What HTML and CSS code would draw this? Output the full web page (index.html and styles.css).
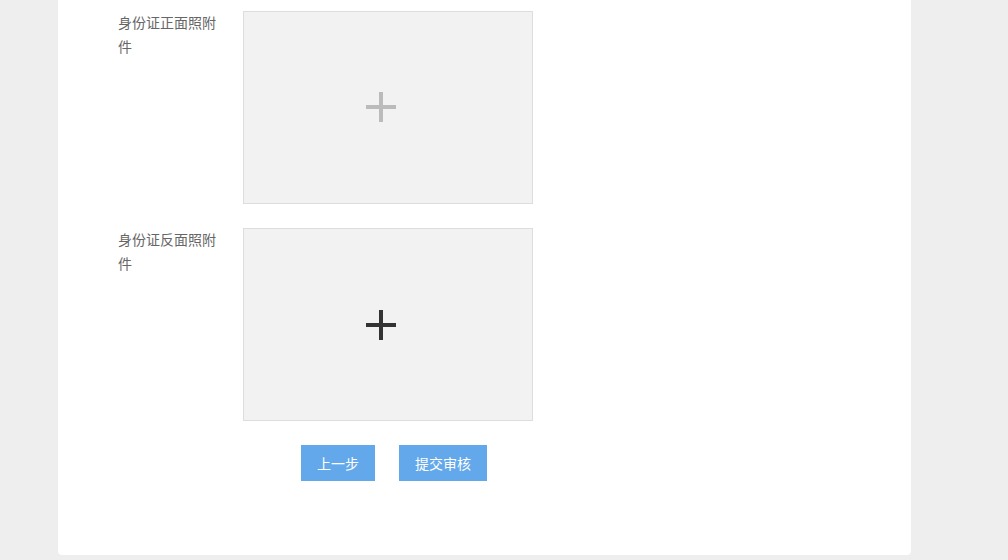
FILE: index.html
```html
<!DOCTYPE html>
<html lang="zh-CN">
<head>
<meta charset="utf-8">
<title>身份证上传</title>
<link rel="stylesheet" href="styles.css">
</head>
<body>
<div class="card">
  <div class="form-row">
    <div class="label">身份证正面照附件</div>
    <div class="upload">
      <svg class="plus plus-light" width="30" height="30" viewBox="0 0 30 30"><path d="M15 0V30M0 15H30" stroke="currentColor" stroke-width="4"/></svg>
    </div>
  </div>
  <div class="form-row">
    <div class="label">身份证反面照附件</div>
    <div class="upload">
      <svg class="plus plus-dark" width="30" height="30" viewBox="0 0 30 30"><path d="M15 0V30M0 15H30" stroke="currentColor" stroke-width="4"/></svg>
    </div>
  </div>
  <div class="actions">
    <button class="btn">上一步</button>
    <button class="btn">提交审核</button>
  </div>
</div>
</body>
</html>
```

FILE: styles.css
```css
html, body {
  margin: 0;
  padding: 0;
  background: #eeeeee;
  font-family: "Microsoft YaHei", "Noto Sans CJK SC", "Noto Sans", sans-serif;
}

.card {
  margin-left: 58px;
  width: 853px;
  box-sizing: border-box;
  background: #ffffff;
  padding: 11px 0 74px 60px;
  border-radius: 0 0 4px 4px;
  display: flex;
  flex-direction: column;
  gap: 24px;
}

.form-row {
  display: flex;
  align-items: flex-start;
}

.label {
  width: 110px;
  margin-right: 15px;
  margin-top: -1px;
  font-size: 14px;
  line-height: 24px;
  color: #666666;
}

.upload {
  width: 288px;
  height: 191px;
  border: 1px solid #dddddd;
  background: #f2f2f2;
  display: flex;
  align-items: center;
  justify-content: center;
  cursor: pointer;
}

.plus {
  display: block;
  margin-right: 14px;
}

.plus-light {
  color: #bbbbbb;
  margin-top: -2px;
}

.plus-dark {
  color: #333333;
}

.actions {
  display: flex;
  gap: 24px;
  padding-left: 183px;
}

.btn {
  height: 36px;
  padding: 0 16px;
  border: none;
  border-radius: 0;
  background: #62a8ea;
  color: #ffffff;
  font-family: inherit;
  font-size: 14px;
  line-height: 36px;
  cursor: pointer;
}
```
